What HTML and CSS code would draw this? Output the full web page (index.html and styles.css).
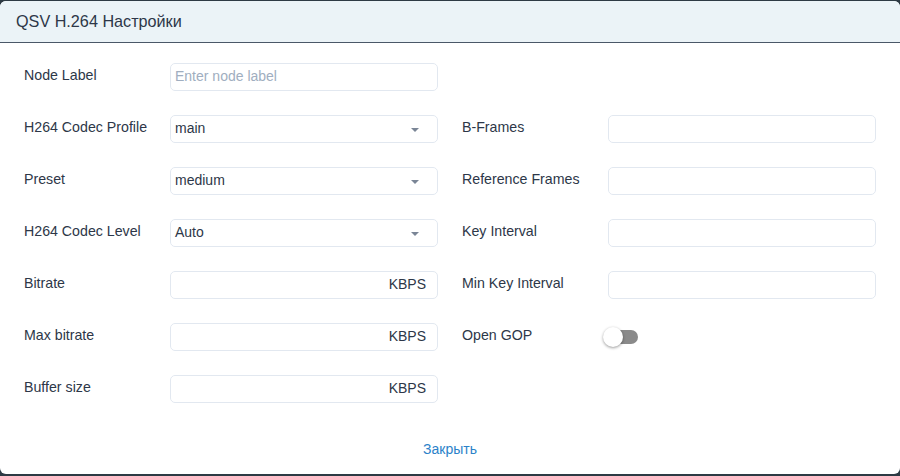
FILE: index.html
```html
<!doctype html>
<html>
<head>
    <meta charset="utf-8">
    <link rel="stylesheet" href="styles.css">
</head>
<body>
    <div class="dialog">
        <div class="dialog-head">QSV H.264 Настройки</div>
        <div class="dialog-body">
            <div class="field">
                <label>Node Label</label>
                <div class="box"><span class="placeholder">Enter node label</span></div>
            </div>
            <div></div>

            <div class="field">
                <label>H264 Codec Profile</label>
                <div class="box select">main<i class="caret"></i></div>
            </div>
            <div class="field">
                <label>B-Frames</label>
                <div class="box"></div>
            </div>

            <div class="field">
                <label>Preset</label>
                <div class="box select">medium<i class="caret"></i></div>
            </div>
            <div class="field">
                <label>Reference Frames</label>
                <div class="box"></div>
            </div>

            <div class="field">
                <label>H264 Codec Level</label>
                <div class="box select">Auto<i class="caret"></i></div>
            </div>
            <div class="field">
                <label>Key Interval</label>
                <div class="box"></div>
            </div>

            <div class="field">
                <label>Bitrate</label>
                <div class="box unit">KBPS</div>
            </div>
            <div class="field">
                <label>Min Key Interval</label>
                <div class="box"></div>
            </div>

            <div class="field">
                <label>Max bitrate</label>
                <div class="box unit">KBPS</div>
            </div>
            <div class="field">
                <label>Open GOP</label>
                <div class="switch"><span class="track"></span><span class="knob"></span></div>
            </div>

            <div class="field">
                <label>Buffer size</label>
                <div class="box unit">KBPS</div>
            </div>
            <div></div>
        </div>
        <div class="dialog-foot">
            <a class="close">Закрыть</a>
        </div>
    </div>
</body>
</html>
```

FILE: styles.css
```css
* {
    margin: 0;
    padding: 0;
    box-sizing: border-box;
}
html, body {
    width: 100%;
    height: 100%;
}
body {
    background-color: #2d3a44;
    font-family: "Liberation Sans", Arial, sans-serif;
    color: #2d3748;
    overflow: hidden;
}
.dialog {
    margin-top: 1px;
    height: 473px;
    background-color: #fff;
    border-radius: 6px;
    overflow: hidden;
}
.dialog-head {
    height: 42px;
    padding: 0 16px;
    background-color: #ebf3f7;
    border-bottom: 1px solid #4a5868;
    font-size: 16.2px;
    line-height: 40px;
}
.dialog-body {
    display: grid;
    grid-template-columns: 1fr 1fr;
    column-gap: 24px;
    row-gap: 24px;
    padding: 20px 24px 24px;
}
.field {
    display: grid;
    grid-template-columns: 146px 1fr;
    height: 28px;
}
.field label {
    font-size: 14.2px;
    line-height: 20px;
    padding-top: 2px;
}
.box {
    position: relative;
    height: 28px;
    border: 1px solid #e2e8f0;
    border-radius: 5px;
    padding: 0 4px;
    font-size: 14px;
    line-height: 25px;
}
.placeholder {
    color: #a0aec0;
}
.caret {
    position: absolute;
    right: 18px;
    top: 12px;
    width: 0;
    height: 0;
    border-left: 4.5px solid transparent;
    border-right: 4.5px solid transparent;
    border-top: 4px solid #7a8596;
}
.unit {
    text-align: right;
    padding-right: 11px;
}
.switch {
    position: relative;
    height: 28px;
    margin-left: -5px;
}
.track {
    position: absolute;
    left: 1px;
    top: 7px;
    width: 34px;
    height: 14px;
    border-radius: 7px;
    background-color: #8a8a8a;
}
.knob {
    position: absolute;
    left: 0;
    top: 4px;
    width: 20px;
    height: 20px;
    border-radius: 50%;
    background-color: #fff;
    box-shadow: 0 1px 3px rgba(0, 0, 0, 0.4);
}
.dialog-foot {
    text-align: center;
    padding-top: 12px;
}
.close {
    font-size: 14px;
    line-height: 20px;
    color: #2b82c9;
    cursor: pointer;
}
```
